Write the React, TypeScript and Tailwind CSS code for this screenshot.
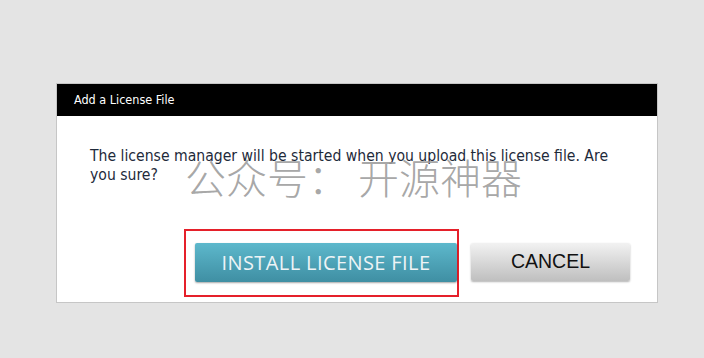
export default function App() {
  return (
    <div className="relative h-[358px] w-[704px] overflow-hidden bg-[#e4e4e4] pl-[56px] pt-[83px]">
      <div className="relative h-[220px] w-[602px] border border-[#c6c6c6] bg-white">
        <div className="flex h-[32px] items-center bg-black pl-[17px] font-['DejaVu_Sans_Condensed','DejaVu_Sans',sans-serif] text-[12.5px] text-white">
          Add a License File
        </div>

        <p className="pl-[33px] pr-[30px] pt-[31px] font-['DejaVu_Sans_Condensed','DejaVu_Sans',sans-serif] text-[15.6px] leading-[19px] text-[#1e2a3a]">
          The license manager will be started when you upload this license file. Are you sure?
        </p>

        <div className="mt-[44px] flex items-start pl-[127px]">
          <div className="border-2 border-[#e5202a] pb-[13px] pl-[9px] pr-0 pt-[12px]">
            <button
              type="button"
              className="flex h-[39px] w-[262px] items-center justify-center rounded-[2px] bg-gradient-to-b from-[#5db8cc] to-[#3f8fa3] font-['Open_Sans',sans-serif] text-[20px] tracking-[0.4px] text-[#eef4f6] shadow-[0_1px_2px_rgba(0,0,0,0.35)]"
            >
              INSTALL LICENSE FILE
            </button>
          </div>
          <button
            type="button"
            className="ml-[12px] mt-[14px] flex h-[38px] w-[159px] items-center justify-center rounded-[2px] bg-gradient-to-b from-[#f2f2f2] to-[#bfbfbf] font-['Liberation_Sans',Arial,sans-serif] text-[19.5px] text-[#111] shadow-[0_1px_2px_rgba(0,0,0,0.3)]"
          >
            CANCEL
          </button>
        </div>

        <div className="pointer-events-none absolute left-[128px] top-[72px] font-['Noto_Sans_CJK_SC',sans-serif] text-[41px] font-light leading-none text-[#9c9c9c]/90">
          公众号： 开源神器
        </div>
      </div>
    </div>
  );
}
